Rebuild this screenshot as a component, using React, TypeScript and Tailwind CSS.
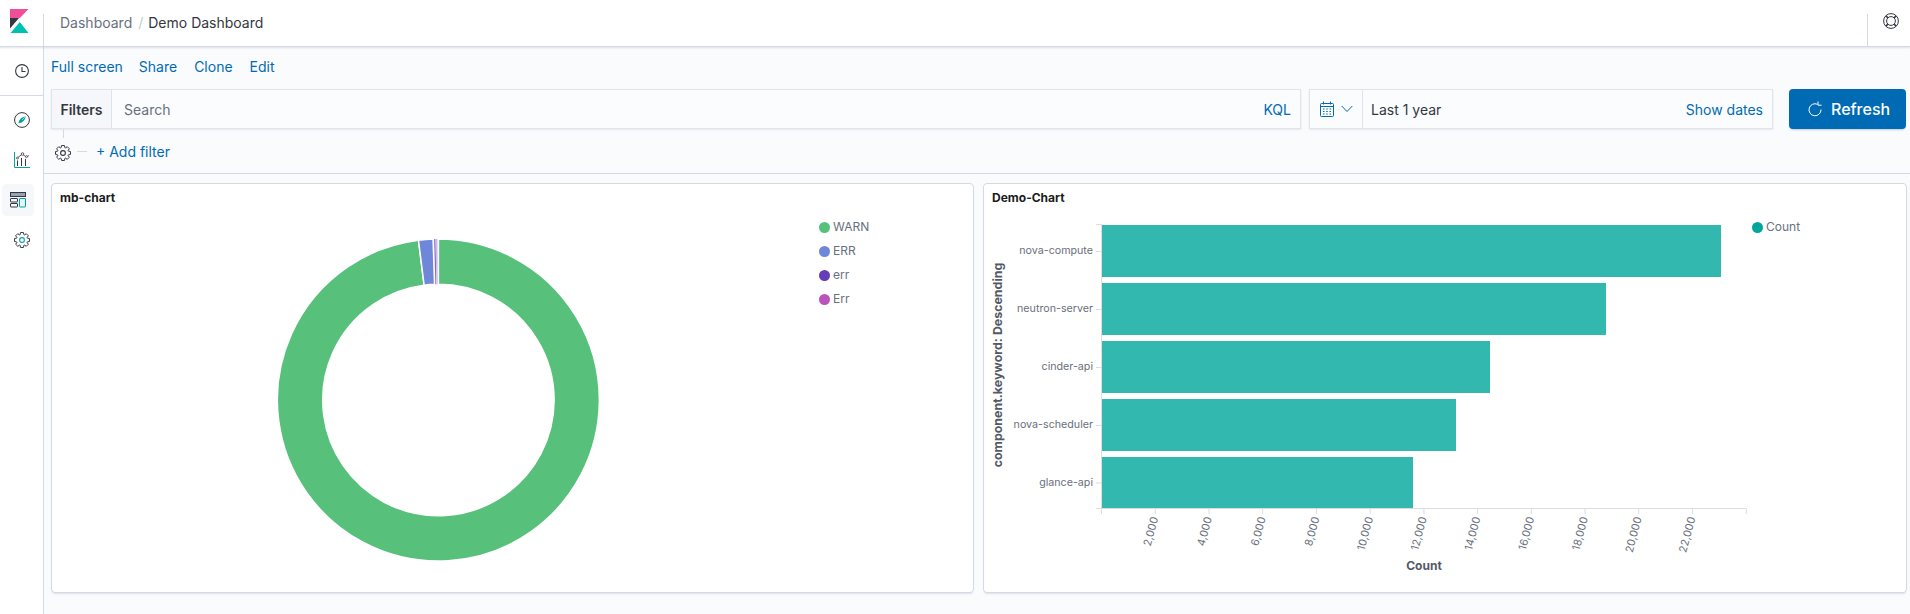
import React from "react";

const font = { fontFamily: "Inter, 'Noto Sans', sans-serif" };

function Logo() {
  return (
    <svg width="19" height="25" viewBox="0 0 19 25">
      <path d="M0 9V0H18.5L9.8 9Z" fill="#f04e98" />
      <path d="M0 9H9L0 19.5Z" fill="#343741" />
      <path d="M0.5 24L9.8 13L18.5 24Z" fill="#00bfb3" />
    </svg>
  );
}

function Clock() {
  return (
    <svg width="16" height="16" viewBox="0 0 16 16" fill="none" stroke="#343741" strokeWidth="1.1">
      <circle cx="8" cy="8" r="6.4" />
      <path d="M8 4v4.5h3.5" />
    </svg>
  );
}

function Compass() {
  return (
    <svg width="16" height="16" viewBox="0 0 16 16" fill="none">
      <circle cx="8" cy="8" r="7.4" stroke="#343741" />
      <path d="M11.6 4.4C11.4 7 9.8 10 5.6 11C4.4 11.3 4.4 11.3 4.6 10.4C5.6 6.4 8.6 4.6 11.6 4.4Z" fill="#00a69b" />
      <path d="M8.2 7.8L10.8 5.2" stroke="#fff" strokeWidth="0.6" />
    </svg>
  );
}

function Visualize() {
  return (
    <svg width="16" height="16" viewBox="0 0 16 16" fill="none">
      <path d="M.5 0V15.5H16" stroke="#00a69b" />
      <path d="M2.5 6.5L8.5 2L12 5L15 3.6" stroke="#343741" strokeWidth="0.8" />
      <path d="M3.5 14V8.5M7.5 14V6M11.5 14V7" stroke="#343741" />
      <circle cx="8.5" cy="2" r="1.3" fill="#fff" stroke="#343741" strokeWidth="0.8" />
      <circle cx="3.5" cy="6" r="1" fill="#fff" stroke="#343741" strokeWidth="0.7" />
      <circle cx="12.5" cy="4.6" r="1" fill="#fff" stroke="#343741" strokeWidth="0.7" />
    </svg>
  );
}

function DashboardIcon() {
  return (
    <svg width="16" height="16" viewBox="0 0 16 16" fill="none">
      <rect x="0.5" y="0.5" width="15" height="4" fill="#98a2b3" stroke="#343741" />
      <rect x="0.5" y="6.5" width="7" height="3.5" rx="0.5" stroke="#343741" />
      <rect x="0.5" y="11.5" width="7" height="3.5" rx="0.5" stroke="#343741" />
      <rect x="9.5" y="6.5" width="6" height="8.5" rx="0.5" fill="#e6f6f5" stroke="#00a69b" />
    </svg>
  );
}

const gearPath = (() => {
  const pts: string[] = [];
  const n = 8;
  const c = 8;
  const R = 7.6;
  const r = 5.7;
  for (let i = 0; i < n; i++) {
    const a = (i * 360) / n - 90;
    const seq: [number, number][] = [
      [r, a - 19],
      [R, a - 11],
      [R, a + 11],
      [r, a + 19],
    ];
    seq.forEach(([rr, d]) => {
      const t = (d * Math.PI) / 180;
      pts.push(`${(c + rr * Math.cos(t)).toFixed(2)} ${(c + rr * Math.sin(t)).toFixed(2)}`);
    });
  }
  return `M${pts.join("L")}Z`;
})();

function Gear({ accent = "#343741" }: { accent?: string }) {
  return (
    <svg width="16" height="16" viewBox="0 0 16 16" fill="none">
      <path d={gearPath} stroke="#343741" strokeLinejoin="round" />
      <circle cx="8" cy="8" r="2.4" stroke={accent} strokeWidth="1.1" />
    </svg>
  );
}

function LifeBuoy() {
  return (
    <svg width="16" height="16" viewBox="0 0 16 16" fill="none" stroke="#343741">
      <circle cx="8" cy="8" r="7.4" />
      <circle cx="8" cy="8" r="4.4" />
      <path d="M2.8 2.8L4.9 4.9M13.2 2.8L11.1 4.9M2.8 13.2L4.9 11.1M13.2 13.2L11.1 11.1" strokeWidth="1.6" />
    </svg>
  );
}

function Calendar() {
  return (
    <svg width="14" height="16" viewBox="0 0 14 16" fill="none" stroke="#006bb4">
      <rect x="0.5" y="2.5" width="13" height="13" rx="1" />
      <path d="M0.5 5.5H13.5M3.5 0.5V3.5M10.5 0.5V3.5" />
      <path d="M3 8h1.5M6.2 8h1.5M9.5 8H11M3 10.5h1.5M6.2 10.5h1.5M9.5 10.5H11M3 13h1.5M6.2 13h1.5M9.5 13H11" strokeWidth="1.2" />
    </svg>
  );
}

function Chevron() {
  return (
    <svg width="12" height="8" viewBox="0 0 12 8" fill="none" stroke="#006bb4">
      <path d="M.7 1L6 6.5L11.3 1" />
    </svg>
  );
}

function RefreshIcon() {
  return (
    <svg width="14" height="16" viewBox="0 0 14 16" fill="none" stroke="#fff">
      <path d="M9.5 3.3A6 6 0 1 0 13 8.5" strokeWidth="1" />
      <path d="M10 .5V4.2H13.5" strokeWidth="1" />
    </svg>
  );
}

const rad = (a: number) => ((a - 90) * Math.PI) / 180;
function slice(a0: number, a1: number, cx: number, cy: number, r0: number, r1: number) {
  const p = (r: number, a: number) => `${(cx + r * Math.cos(rad(a))).toFixed(2)} ${(cy + r * Math.sin(rad(a))).toFixed(2)}`;
  const large = a1 - a0 > 180 ? 1 : 0;
  return `M${p(r1, a0)}A${r1} ${r1} 0 ${large} 1 ${p(r1, a1)}L${p(r0, a1)}A${r0} ${r0} 0 ${large} 0 ${p(r0, a0)}Z`;
}

function Donut() {
  const slices = [
    { a0: 0, a1: 352.9, c: "#57c17b" },
    { a0: 352.9, a1: 358.1, c: "#6f87d8" },
    { a0: 358.5, a1: 359.0, c: "#663db8" },
    { a0: 359.0, a1: 359.7, c: "#c9b8ea" },
  ];
  return (
    <svg width="760" height="382" viewBox="52 210 760 382" className="block shrink-0">
      {slices.map((s, i) => (
        <path key={i} d={slice(s.a0, s.a1, 438.4, 400, 115.7, 161)} fill={s.c} stroke="#fff" strokeWidth={i === 0 || i === 1 ? 1.5 : 0.2} />
      ))}
    </svg>
  );
}

const legend = [
  { label: "WARN", c: "#57c17b" },
  { label: "ERR", c: "#6f87d8" },
  { label: "err", c: "#663db8" },
  { label: "Err", c: "#bc52bc" },
];

const bars = [
  { label: "nova-compute", y: 225, h: 52, end: 1721 },
  { label: "neutron-server", y: 283, h: 52, end: 1606 },
  { label: "cinder-api", y: 341, h: 52, end: 1490 },
  { label: "nova-scheduler", y: 399, h: 52, end: 1456 },
  { label: "glance-api", y: 457, h: 51, end: 1413 },
];

const ticks = Array.from({ length: 13 }, (_, i) => i);

function BarChart() {
  const axis = "#dddddd";
  return (
    <svg width="768" height="382" viewBox="984 210 768 382" className="block shrink-0" style={font}>
      {bars.map((b) => (
        <g key={b.label}>
          <rect x={1102} y={b.y} width={b.end - 1102} height={b.h} fill="#33b8af" />
          <path d={`M1096 ${b.y + b.h / 2 + 0.5}H1101`} stroke={axis} />
          <text x={1093} y={b.y + b.h / 2 + 3} textAnchor="end" fontSize="10.7" fill="#69707d">
            {b.label}
          </text>
        </g>
      ))}
      <path d="M1101.5 224V509M1096 224.5H1101M1096 508.5H1746.5" stroke={axis} fill="none" />
      {ticks.map((i) => {
        const x = 1101.5 + i * 53.73;
        return (
          <g key={i}>
            <path d={`M${x} 509V514`} stroke={axis} />
            {i > 0 && i < 12 && (
              <text transform={`translate(${x + 3} 518) rotate(-75)`} textAnchor="end" fontSize="10.8" fill="#69707d">
                {(i * 2000).toLocaleString("en-US")}
              </text>
            )}
          </g>
        );
      })}
      <text transform="translate(1002 365) rotate(-90)" textAnchor="middle" fontSize="12.4" fontWeight="700" fill="#535966">
        component.keyword: Descending
      </text>
      <text x={1424} y={570} textAnchor="middle" fontSize="12" fontWeight="700" fill="#535966">
        Count
      </text>
    </svg>
  );
}

function LegendItem({ label, c }: { label: string; c: string }) {
  return (
    <div className="flex items-center h-[24px] gap-[3px] text-[12px] text-[#69707d]">
      <span className="block w-[11px] h-[11px] rounded-full" style={{ background: c }} />
      <span>{label}</span>
    </div>
  );
}

function Panel({ title, className, children }: { title: string; className: string; children: React.ReactNode }) {
  return (
    <div className={`bg-white border border-[#d3dae6] rounded-[4px] shadow-[0_2px_2px_-1px_rgba(152,162,179,0.3)] ${className}`}>
      <div className="h-[26px] pl-[8px] pt-[7px] text-[12px] leading-[14px] font-bold text-[#1a1c21]">{title}</div>
      <div className="flex items-start">{children}</div>
    </div>
  );
}

export default function App() {
  return (
    <div className="w-[1910px] h-[614px] overflow-hidden flex flex-col bg-[#fafbfd]" style={font}>
      <header className="h-[47px] shrink-0 flex bg-white border-b border-[#d3dae6] shadow-[0_1px_2px_rgba(152,162,179,0.3)] relative z-10">
        <div className="w-[43px] flex pl-[10px] pt-[9px] shrink-0">
          <Logo />
        </div>
        <div className="flex-1 border-l border-[#d3dae6] mt-[14px] relative">
          <div className="absolute left-[16px] top-[-14px] h-[44px] flex items-center text-[14px]">
            <span className="text-[#69707d]">Dashboard</span>
            <span className="text-[#c2c9d6] ml-[6px] mr-[5px]">/</span>
            <span className="text-[#343741]">Demo Dashboard</span>
          </div>
        </div>
        <div className="w-[43px] shrink-0 mt-[14px] border-l border-[#d3dae6] relative">
          <div className="absolute left-[15px] top-[-1px]">
            <LifeBuoy />
          </div>
        </div>
      </header>
      <div className="flex flex-1 min-h-0">
        <nav className="w-[44px] shrink-0 bg-white border-r border-[#d3dae6] flex flex-col items-center">
          <div className="h-[49px] w-full border-b border-[#d3dae6] flex items-center justify-center">
            <Clock />
          </div>
          <div className="h-[40px] mt-[4px] w-full flex items-center justify-center">
            <Compass />
          </div>
          <div className="h-[40px] w-full flex items-center justify-center">
            <Visualize />
          </div>
          <div className="h-[32px] w-[32px] mt-[4px] -ml-[7px] rounded-[4px] bg-[#f5f7fa] flex items-center justify-center">
            <DashboardIcon />
          </div>
          <div className="h-[48px] w-full flex items-center justify-center">
            <Gear accent="#00a69b" />
          </div>
        </nav>
        <main className="flex-1 min-w-0 flex flex-col">
          <div className="h-[127px] shrink-0 border-b border-[#d3dae6] pl-[7px] pr-[4px]">
            <div className="h-[38px] mb-[4px] flex items-center gap-[16px] text-[14px] text-[#006bb4]">
              <span>Full screen</span>
              <span>Share</span>
              <span className="ml-[1px]">Clone</span>
              <span className="ml-[1px]">Edit</span>
            </div>
            <div className="h-[40px] flex text-[14px]">
              <div className="flex-1 min-w-0 flex bg-[#fbfcfd] border border-[#dfe3ea] shadow-[0_1px_2px_rgba(152,162,179,0.2)]">
                <div className="w-[60px] shrink-0 bg-[#f5f7fa] border-r border-[#dfe3ea] flex items-center justify-center font-semibold text-[#343741]">
                  Filters
                </div>
                <div className="flex-1 flex items-center justify-between pl-[12px] pr-[9px]">
                  <span className="text-[#69707d]">Search</span>
                  <span className="text-[#006bb4]">KQL</span>
                </div>
              </div>
              <div className="w-[464px] shrink-0 ml-[8px] flex bg-[#fbfcfd] border border-[#dfe3ea] shadow-[0_1px_2px_rgba(152,162,179,0.2)]">
                <div className="w-[53px] shrink-0 border-r border-[#dfe3ea] flex items-center justify-center gap-[7px]">
                  <Calendar />
                  <Chevron />
                </div>
                <div className="flex-1 flex items-center justify-between pl-[8px] pr-[9px]">
                  <span className="text-[#343741]">Last 1 year</span>
                  <span className="text-[#006bb4]">Show dates</span>
                </div>
              </div>
              <div className="w-[117px] shrink-0 ml-[16px] rounded-[4px] bg-[#006bb4] text-white flex items-center pl-[19px] gap-[9px] text-[16px] font-medium shadow-[0_2px_2px_-1px_rgba(54,97,126,0.3)]">
                <RefreshIcon />
                <span>Refresh</span>
              </div>
            </div>
            <div className="relative flex items-center h-[44px] pl-[4px] text-[14px] text-[#006bb4]">
              <span className="absolute left-[12px] top-0 h-[9px] w-px bg-[#d3dae6]" />
              <span className="block mt-[3px]">
                <Gear />
              </span>
              <span className="block w-[10px] h-px bg-[#d3dae6] ml-[6px] mr-[9px] mt-[1px]" />
              <span>+ Add filter</span>
            </div>
          </div>
          <div className="flex gap-[9px] pl-[7px] pr-[3px] pt-[9px]">
            <Panel title="mb-chart" className="w-[923px] h-[410px]">
              <Donut />
              <div className="flex flex-col pt-[5px] ml-[7px]">
                {legend.map((l) => (
                  <LegendItem key={l.label} {...l} />
                ))}
              </div>
            </Panel>
            <Panel title="Demo-Chart" className="flex-1 h-[410px]">
              <BarChart />
              <div className="pt-[5px]">
                <LegendItem label="Count" c="#00a69b" />
              </div>
            </Panel>
          </div>
        </main>
      </div>
    </div>
  );
}
